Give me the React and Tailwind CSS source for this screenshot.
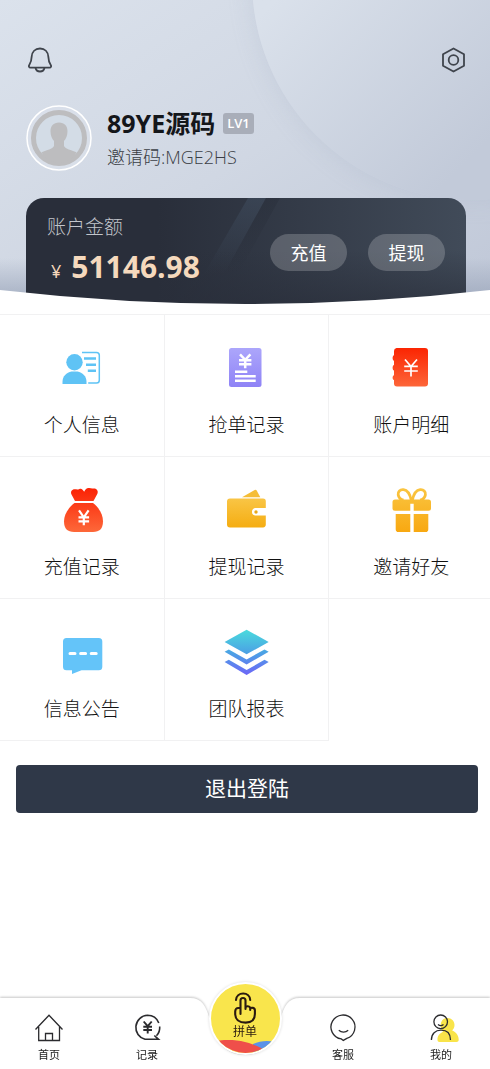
const ink = '#2b2b2e'

function ProfileIcon() {
  return (
    <svg viewBox="0 0 48 48" className="size-12" fill="none" stroke="#5fc3f5">
      <circle cx="16.500" cy="18.200" r="8.200" fill="#5fc3f5" stroke="none" />
      <path d="M4.500 40v-2c0-6 4-9.500 9-10.500h6c5 1 9 4.500 9 10.500v2z" fill="#5fc3f5" stroke="none" />
      <path d="M24 8.500H38.500a2.800 2.800 0 0 1 2.800 2.800v25a2.800 2.800 0 0 1-2.800 2.800H30.200" strokeWidth="1.500" />
      <path d="M26 14.500h12M28 20.800h10M29.800 26.800h8.200" strokeWidth="2.400" />
    </svg>
  )
}

function OrdersIcon() {
  return (
    <svg viewBox="0 0 48 48" className="size-12">
      <defs>
        <linearGradient id="orders" x1="0" y1="0" x2="0" y2="1">
          <stop offset="0" stopColor="#aca6fb" />
          <stop offset="1" stopColor="#8f83f6" />
        </linearGradient>
      </defs>
      <rect x="7" y="4" width="32.500" height="39" rx="2.500" fill="url(#orders)" />
      <path d="M18 10.300l5.200 5.500 5.200-5.500M23.200 15.500v8.700M17 16.300h12.400M17 20.300h12.400" fill="none" stroke="#fff" strokeWidth="2.500" />
      <path d="M13 27.700h12.300M13 32.200h20.700M13 36.700h20.700" stroke="#fff" strokeWidth="2.400" />
    </svg>
  )
}

function LedgerIcon() {
  return (
    <svg viewBox="0 0 48 48" className="size-12">
      <defs>
        <linearGradient id="ledger" x1="0" y1="0" x2="0" y2="1">
          <stop offset="0" stopColor="#fb2502" />
          <stop offset="1" stopColor="#fd6639" />
        </linearGradient>
      </defs>
      <path
        d="M9.500 4h28.500a3 3 0 0 1 3 3v32.500a3 3 0 0 1-3 3H10a3 3 0 0 1-3-3v-3.500c-1.800-.5-1.800-4.300 0-4.800v-4.600c-1.800-.5-1.800-5 0-5.500v-4.300c-1.800-.5-1.800-5 0-5.500V7a3 3 0 0 1 2.500-3z"
        fill="url(#ledger)"
      />
      <path d="M18 15.500l6 7 6-7M24 22v10.500M17.200 22.300h13.600M17.200 27h13.600" fill="none" stroke="#fff" strokeWidth="1.700" />
    </svg>
  )
}

function MoneyBagIcon() {
  return (
    <svg viewBox="0 0 48 48" className="size-12">
      <defs>
        <linearGradient id="bag" x1="0" y1="0" x2="0" y2="48" gradientUnits="userSpaceOnUse">
          <stop offset="0" stopColor="#fb1f02" />
          <stop offset="1" stopColor="#fd6b3c" />
        </linearGradient>
      </defs>
      <path
        d="M17 15l-3.500-6.500c-1.400-3 .6-5.400 3.500-5.200 2 .1 3 .3 4.400-.4 2-.9 3.600.6 4.800 2.900 1-2.400 2.800-4.100 5-3.700 1.600.3 2.400.6 4 .4 3.500-.5 5.400 2.300 4.200 5.300L35.500 15z"
        fill="url(#bag)"
      />
      <path d="M16.500 17h18.500c6.500 5 10 12 10 18.500 0 7-3.500 10.500-10 10.500H16c-6.500 0-10-3.500-10-10.500C6 29 10 22 16.500 17z" fill="url(#bag)" />
      <path d="M21 24.300l4.800 7 4.800-7M25.800 31v8.300M20.500 31.300h10.600M20.500 35.300h10.600" fill="none" stroke="#fff" strokeWidth="2.200" />
    </svg>
  )
}

function WalletIcon() {
  return (
    <svg viewBox="0 0 48 48" className="size-12">
      <defs>
        <linearGradient id="wallet" x1="0" y1="0" x2="0" y2="1">
          <stop offset="0" stopColor="#f9c545" />
          <stop offset="1" stopColor="#f5ad12" />
        </linearGradient>
      </defs>
      <path d="M20 11.300L32.700 4q1.300-.7 2 .6l3.600 6.700z" fill="#f5bd35" />
      <path
        d="M8 12.500h33a2.800 2.800 0 0 1 2.800 2.800V22H33.500a3.500 3.500 0 0 0-3.500 3.800 3.500 3.500 0 0 0 3.500 3.800h10.300v9a2.800 2.800 0 0 1-2.800 2.800H8a3 3 0 0 1-3-3V15.500a3 3 0 0 1 3-3z"
        fill="url(#wallet)"
      />
      <circle cx="34" cy="26" r="1.700" fill="#e8a81b" />
    </svg>
  )
}

function GiftIcon() {
  return (
    <svg viewBox="0 0 48 48" className="size-12">
      <defs>
        <linearGradient id="gift" x1="0" y1="0" x2="0" y2="48" gradientUnits="userSpaceOnUse">
          <stop offset="0" stopColor="#fac643" />
          <stop offset="1" stopColor="#f8a70f" />
        </linearGradient>
      </defs>
      <path
        d="M24.300 14.500c-1-5-3.500-10.300-7.800-10.800-3.500-.4-5.800 2-5.300 5 .4 2.700 2.500 4.800 5.300 5.500M25.300 14.500c1-5 3.500-10.300 7.800-10.800 3.500-.4 5.800 2 5.300 5-.4 2.700-2.500 4.800-5.300 5.500"
        fill="none"
        stroke="url(#gift)"
        strokeWidth="2.800"
      />
      <path d="M8 13.500h33.500a2.500 2.500 0 0 1 2.500 2.500v6.300a2.500 2.500 0 0 1-2.500 2.500H26.700v-7h-3.400v7H8a2.500 2.500 0 0 1-2.500-2.500V16A2.500 2.500 0 0 1 8 13.500z" fill="url(#gift)" />
      <path d="M8.700 28h14.600v18H11.500a2.800 2.800 0 0 1-2.800-2.800zM26.700 28h14.600v15.200a2.800 2.800 0 0 1-2.800 2.800H26.700z" fill="url(#gift)" />
    </svg>
  )
}

function MessageIcon() {
  return (
    <svg viewBox="0 0 48 48" className="size-12">
      <path d="M8.500 10h32.300a3.500 3.500 0 0 1 3.500 3.500v25.300a3.500 3.500 0 0 1-3.500 3.500H23.500L14 46v-3.700H8.500A3.500 3.500 0 0 1 5 38.800V13.500A3.500 3.500 0 0 1 8.500 10z" fill="#64c4f9" />
      <path d="M12 25.500h5M22.600 25.500h5M33.200 25.500h5" stroke="#fff" strokeWidth="3" strokeLinecap="round" />
    </svg>
  )
}

function LayersIcon() {
  return (
    <svg viewBox="0 0 48 48" className="size-12">
      <defs>
        <linearGradient id="layers" x1="0" y1="0" x2="0" y2="48" gradientUnits="userSpaceOnUse">
          <stop offset="0" stopColor="#4adfdc" />
          <stop offset=".5" stopColor="#4ba4e4" />
          <stop offset="1" stopColor="#6f63f8" />
        </linearGradient>
      </defs>
      <path
        d="M24.600 1.700L46.700 14 24.600 26.300 2.600 14zM2.600 23.700l4.200-2.200 17.800 10 17.900-10 4.200 2.200-22.100 12.800zM2.600 34l4.200-2.200 17.800 10.200 17.900-10.200 4.200 2.200-22.100 13z"
        fill="url(#layers)"
      />
    </svg>
  )
}

function HomeIcon() {
  return (
    <svg viewBox="0 0 28 28" className="size-7" fill="none" stroke={ink} strokeWidth="1.300">
      <path d="M.5 15.500L14 1.300l13.500 14.200M3.700 13v13.500h20.800V13M10.500 26.500v-7h7v7" />
    </svg>
  )
}

function RecordIcon() {
  return (
    <svg viewBox="0 0 28 28" className="size-7" fill="none" stroke={ink} strokeWidth="1.600">
      <path d="M12 25.300A12.200 12.200 0 0 1 14.500 1.300 12.200 12.200 0 0 1 25.800 9M26.700 12.500c.3 4-1 7-3.200 9.300M11.500 25.300h14l-4.200-3.800" />
      <path d="M10.700 7.500l4 4.700 4-4.700M14.700 12v7.500M10.300 12.800h8.700M10.300 16h8.700" strokeWidth="1.900" />
    </svg>
  )
}

function ServiceIcon() {
  return (
    <svg viewBox="0 0 28 28" className="size-7 overflow-visible" fill="none" stroke={ink} strokeWidth="1.300">
      <path d="M12.300 24.900a12 12 0 1 1 5.500-.5l-3.500 2z" />
      <path d="M9.800 16.300c2.600 2.300 6.800 2.300 9.400 0" />
    </svg>
  )
}

function MineIcon() {
  return (
    <svg viewBox="0 0 28 28" className="size-7 overflow-visible" fill="none" stroke={ink} strokeWidth="1.300">
      <path d="M10.500 26c-.3-4 2-6.600 5.500-8.200-2.500-3.500-2.800-6-2-9 1-3.500 3.500-4.800 6.500-4.800 4 0 7 3 7 7 0 2.500-1 4-2.300 5.500 4.500 2 6.600 5.500 6.500 9.500 0 1.300-1 2-2.200 2H12.500c-1.200 0-2-.8-2-2z" fill="#f9e44a" stroke="none" />
      <circle cx="13.700" cy="7.800" r="6.800" />
      <path d="M4.400 26c0-6.500 4-9.800 9.600-9.800s9.500 3.300 9.500 9.800M11 10.500c1.500 1.300 4 1.300 5.500 0" />
    </svg>
  )
}

function TapIcon() {
  return (
    <svg viewBox="0 0 22 32" className="relative h-8 w-[22px]" fill="none" stroke="#2a1a10" strokeWidth="2.100" strokeLinejoin="round" strokeLinecap="round">
      <path d="M2 8c.3-3.800 3.300-6.500 7.200-6.500s6.800 2.700 7 6.500" />
      <path d="M6.500 22V8.500a2.500 2.500 0 0 1 5 0V17M11.500 15.500c.5-1.800 4.300-1.800 4.700.5V18M16.200 16.500c1-1.300 4.700-1 4.700 1.800V22c0 5.500-3.300 8.600-9.200 8.600-6.500 0-10.200-3-10.500-8.100v-3c0-2.200 1.300-3.500 3-3.500h2.300" />
    </svg>
  )
}

const menu = [
  { label: '个人信息', Icon: ProfileIcon },
  { label: '抢单记录', Icon: OrdersIcon },
  { label: '账户明细', Icon: LedgerIcon },
  { label: '充值记录', Icon: MoneyBagIcon },
  { label: '提现记录', Icon: WalletIcon },
  { label: '邀请好友', Icon: GiftIcon },
  { label: '信息公告', Icon: MessageIcon },
  { label: '团队报表', Icon: LayersIcon },
]

function Avatar() {
  return (
    <svg viewBox="0 0 66 66" className="size-[66px] shrink-0">
      <circle cx="33" cy="33" r="32" fill="#d9e0ea" fillOpacity=".8" stroke="#fff" strokeWidth="1.500" />
      <circle cx="33" cy="33" r="25.500" fill="#d3dce6" stroke="#bdbdbf" strokeWidth="5" />
      <path
        d="M33 17.500c5.500 0 8.700 3.500 8.500 9-.1 4-1.500 7.500-3.500 9.500v5c1.500 3 7 4 12.500 6.200C47 54 40.500 57.500 33 57.500S19 54 15.500 47.200C21 45 26.500 44 28 41v-5c-2-2-3.400-5.500-3.500-9.500-.2-5.500 3-9 8.500-9z"
        fill="#bdbdbf"
      />
    </svg>
  )
}

function Header() {
  return (
    <header className="relative overflow-hidden bg-linear-to-br from-[#dbe2ec] via-[#d0d7e3] to-[#bfc7d7] pt-[47px] pr-6 pl-[26px]">
      <div className="absolute -top-60 -right-[202px] size-[440px] rounded-full bg-linear-to-br from-[#dae1eb] from-30% to-[#c2cad9] to-70% shadow-[0_0_24px_rgba(150,162,186,0.22)]" />
      <div className="absolute inset-x-0 bottom-0 h-14 bg-linear-to-t from-[#98a3b8] to-transparent" />

      <div className="relative flex justify-between">
        <button aria-label="消息">
          <svg viewBox="0 0 26 26" className="size-[26px]" fill="none" stroke="#3f444c" strokeWidth="1.800" strokeLinejoin="round">
            <path d="M14 1.500c-5 0-8 3.500-8.300 8-.2 4-.7 6-2.300 8.200-1 1.400-.5 3 1.200 3h18.800c1.700 0 2.200-1.600 1.200-3-1.600-2.200-2.100-4.200-2.300-8.200-.3-4.500-3.300-8-8.300-8zM9.500 21c.5 2.300 2.300 3.500 4.500 3.500s4-1.200 4.500-3.500" />
          </svg>
        </button>
        <button aria-label="设置">
          <svg viewBox="0 0 26 26" className="size-[26px]" fill="none" stroke="#3f444c" strokeWidth="1.800" strokeLinejoin="round">
            <path d="M13.500 1.500l10.500 5.800v11.400l-10.500 5.800L3 18.700V7.300z" />
            <circle cx="13.500" cy="13" r="4.800" />
          </svg>
        </button>
      </div>

      <div className="relative mt-8 flex items-center gap-[15px]">
        <Avatar />
        <div>
          <div className="flex items-center gap-2">
            <h1 className="text-[25px] leading-8 font-bold text-[#14161a]">89YE源码</h1>
            <span className="rounded-[3px] bg-[#a9aeb9] px-1 text-[13px] leading-[21px] font-semibold text-white">LV1</span>
          </div>
          <p className="mt-[6px] text-lg leading-6 font-light text-[#3a3e45]">邀请码:MGE2HS</p>
        </div>
      </div>

      <section className="relative mt-[27px] flex items-start justify-between overflow-hidden rounded-t-[18px] bg-linear-to-r from-[#292e3a] from-30% to-[#414b59] pr-[21px] pb-[25px] pl-[21px]">
        <svg viewBox="0 0 440 116" preserveAspectRatio="none" className="absolute inset-0 h-full w-full">
          <defs>
            <linearGradient id="streak" x1="0" y1="0" x2="0" y2="1">
              <stop offset="0" stopColor="#46566a" stopOpacity=".4" />
              <stop offset="1" stopColor="#46566a" stopOpacity="0" />
            </linearGradient>
            <linearGradient id="streakShade" x1="0" y1="0" x2="0" y2="1">
              <stop offset="0" stopColor="#232833" stopOpacity=".3" />
              <stop offset="1" stopColor="#232833" stopOpacity="0" />
            </linearGradient>
          </defs>
          <path d="M222 0h18L198 76h-20z" fill="url(#streak)" />
          <path d="M240 0h14L212 76h-14z" fill="url(#streakShade)" />
        </svg>
        <div className="absolute inset-x-0 bottom-0 h-16 bg-linear-to-t from-[#292e3a]/80 to-transparent" />
        <div className="relative pt-[17px]">
          <h2 className="text-[19px] leading-6 font-light text-[#c3c6cc]">账户金额</h2>
          <p className="mt-[10px] flex items-baseline gap-[10px] pl-1 text-[#f5d9bd]">
            <span className="text-lg leading-9">¥</span>
            <span className="text-[30px] leading-9 font-bold">51146.98</span>
          </p>
        </div>
        <div className="relative flex gap-[21px] pt-9">
          <button className="h-[37px] w-[77px] rounded-full bg-white/20 text-lg text-white">充值</button>
          <button className="h-[37px] w-[77px] rounded-full bg-white/20 text-lg text-white">提现</button>
        </div>
      </section>

      <svg viewBox="0 0 490 24" preserveAspectRatio="none" className="absolute inset-x-0 bottom-0 h-6 w-full">
        <path d="M0 0Q245 28 490 0v24H0z" fill="#fff" />
      </svg>
    </header>
  )
}

function Menu() {
  return (
    <nav className="overflow-hidden border-t border-[#f1f1f2]">
      <div className="-mr-1 grid grid-cols-3">
        {menu.map(({ label, Icon }) => (
          <a key={label} href="#" className="flex h-[142px] flex-col items-center border-r border-b border-[#f1f1f2] pt-[29px]">
            <Icon />
            <span className="mt-[19px] text-[19px] leading-7 font-light text-[#111]">{label}</span>
          </a>
        ))}
      </div>
    </nav>
  )
}

function Tab({ label, children }) {
  return (
    <a href="#" className="flex flex-col items-center pt-4 text-[11px] leading-4 text-[#222]">
      {children}
      <span className="mt-[5px]">{label}</span>
    </a>
  )
}

function TabBar() {
  return (
    <nav className="fixed inset-x-0 bottom-0">
      {/* bar outline with the dip in the middle */}
      <div className="absolute inset-0 flex drop-shadow-[0_-1px_1px_rgba(0,0,0,0.22)]">
        <div className="flex-1 bg-white" />
        <svg viewBox="0 0 110 71" className="h-full w-[110px]">
          <path d="M0 0c12 0 16 8 20 22 4 24 18 35 35 35s31-11 35-35C94 8 98 0 110 0v71H0z" fill="#fff" />
        </svg>
        <div className="flex-1 bg-white" />
      </div>
      <div className="relative grid h-[71px] grid-cols-5">
        <Tab label="首页"><HomeIcon /></Tab>
        <Tab label="记录"><RecordIcon /></Tab>
        <div className="flex justify-center">
          <a
            href="#"
            className="relative -mt-4 flex size-[73px] flex-col items-center overflow-hidden rounded-full border-2 border-white bg-[#f9e54c] pt-2 text-xs leading-4 text-[#2a1a10] shadow-[0_0_3px_rgba(0,0,0,0.15)]"
          >
            <svg viewBox="0 0 69 69" className="absolute inset-0 h-full w-full">
              <path d="M42 60c7-3 14-4 22-2v11H42z" fill="#5b92e8" />
              <path d="M0 58c18-4 34-2 50 6l5 5H0z" fill="#ef4f4a" />
            </svg>
            <TapIcon />
            <span className="relative">拼单</span>
          </a>
        </div>
        <Tab label="客服"><ServiceIcon /></Tab>
        <Tab label="我的"><MineIcon /></Tab>
      </div>
    </nav>
  )
}

export default function App() {
  return (
    <div className="min-h-screen bg-white pb-24 font-['Open_Sans','Noto_Sans_CJK_SC',sans-serif]">
      <Header />
      <Menu />
      <div className="mt-6 pr-3 pl-4">
        <button className="h-12 w-full rounded bg-[#2f3848] text-[21px] text-white">退出登陆</button>
      </div>
      <TabBar />
    </div>
  )
}
